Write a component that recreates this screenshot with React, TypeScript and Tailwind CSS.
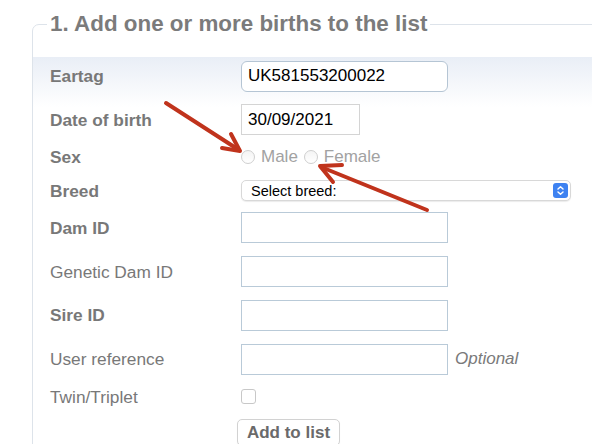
import React from "react";

const font = { fontFamily: '"Liberation Sans", Arial, Helvetica, sans-serif' };

function Label({ children, bold }: { children: React.ReactNode; bold?: boolean }) {
  return (
    <div className={`w-[191px] shrink-0 text-[17.3px] leading-[20px] text-[#787878] ${bold ? "font-bold" : ""}`}>
      {children}
    </div>
  );
}

function TextBox({ w, value, rounded, border }: { w: string; value?: string; rounded?: boolean; border: string }) {
  return (
    <input
      readOnly
      value={value ?? ""}
      className={`${w} h-[31px] border ${border} ${rounded ? "rounded-[6px]" : ""} px-[6px] text-[17px] text-black bg-white outline-none`}
    />
  );
}

function Radio() {
  return (
    <span className="inline-block w-[14px] h-[14px] rounded-full border border-[#cfcfcf] bg-[linear-gradient(to_bottom,#f4f4f4,#ffffff)]" />
  );
}

export default function App() {
  return (
    <div className="relative w-[592px] h-[444px] overflow-hidden bg-white" style={font}>
      <fieldset className="ml-8 mt-[11px] w-[620px] border border-[#dde3ea] rounded-tl-[7px] p-0 m-0">
        <legend className="ml-[14px] px-[3px] text-[22.4px] leading-[26px] font-bold text-[#7b7b7b]">
          1. Add one or more births to the list
        </legend>
        <div className="mt-[20px] pl-[17px] bg-[linear-gradient(to_bottom,#e9eef6,#ffffff_50px)] pb-10">
          <div className="flex items-center h-[38px]">
            <Label bold>Eartag</Label>
            <TextBox w="w-[207px]" value="UK581553200022" rounded border="border-[#b5c5d4]" />
          </div>
          <div className="flex items-center h-[49px]">
            <Label bold>Date of birth</Label>
            <TextBox w="w-[119px]" value="30/09/2021" border="border-[#d4d4d4]" />
          </div>
          <div className="flex items-center h-[26px]">
            <Label bold>Sex</Label>
            <div className="flex items-center text-[17px] leading-[20px] text-[#a2a2a2]">
              <Radio />
              <span className="ml-[6px]">Male</span>
              <span className="ml-[6px] flex"><Radio /></span>
              <span className="ml-[6px]">Female</span>
            </div>
          </div>
          <div className="flex items-center h-[41px]">
            <Label bold>Breed</Label>
            <div className="w-[330px] h-[21px] rounded-[5px] border border-[#d8d8d8] shadow-[0_1px_1px_rgba(0,0,0,0.08)] bg-white flex items-center justify-between pl-[9px] pr-[2px]">
              <span className="text-[14.5px] leading-[16px] text-black">Select breed:</span>
              <span className="w-[15px] h-[15px] rounded-[3px] bg-[#3e82f1] flex items-center justify-center">
                <svg width="9" height="11" viewBox="0 0 9 11" fill="none" stroke="white" strokeWidth="1.5" strokeLinecap="round" strokeLinejoin="round">
                  <path d="M2 4 L4.5 1.8 L7 4" />
                  <path d="M2 7 L4.5 9.2 L7 7" />
                </svg>
              </span>
            </div>
          </div>
          <div className="flex items-center h-[33px]">
            <Label bold>Dam ID</Label>
            <TextBox w="w-[207px]" border="border-[#b9cad8]" />
          </div>
          <div className="flex items-center h-[55px]">
            <Label>Genetic Dam ID</Label>
            <TextBox w="w-[207px]" border="border-[#b9cad8]" />
          </div>
          <div className="flex items-center h-[32px]">
            <Label bold>Sire ID</Label>
            <TextBox w="w-[207px]" border="border-[#b9cad8]" />
          </div>
          <div className="flex items-center h-[56px]">
            <Label>User reference</Label>
            <TextBox w="w-[207px]" border="border-[#b9cad8]" />
            <span className="ml-[7px] text-[17px] italic text-[#7a7a7a]">Optional</span>
          </div>
          <div className="flex items-center h-[19px]">
            <Label>Twin/Triplet</Label>
            <span className="w-[15px] h-[15px] rounded-[3px] border border-[#c8c8c8] bg-white" />
          </div>
          <div className="flex items-start h-[54px] pt-[13px]">
            <div className="w-[187px] shrink-0" />
            <button className="w-[103px] h-[27px] rounded-[5px] border border-[#d2d2d2] bg-white shadow-[0_1px_1px_rgba(0,0,0,0.06)] text-[17px] leading-[20px] font-bold text-[#6a6a6a]">
              Add to list
            </button>
          </div>
        </div>
      </fieldset>
      <svg className="absolute left-0 top-0 pointer-events-none" width="592" height="444" viewBox="0 0 592 444" fill="none" stroke="#c0331c" strokeWidth="4" strokeLinecap="round" strokeLinejoin="round">
        <path d="M166 103 L239 150" />
        <path d="M222 148 L240 151 L231 134" />
        <path d="M427 210 L321 167" />
        <path d="M342 165 L320 166 L333 182" />
      </svg>
    </div>
  );
}
